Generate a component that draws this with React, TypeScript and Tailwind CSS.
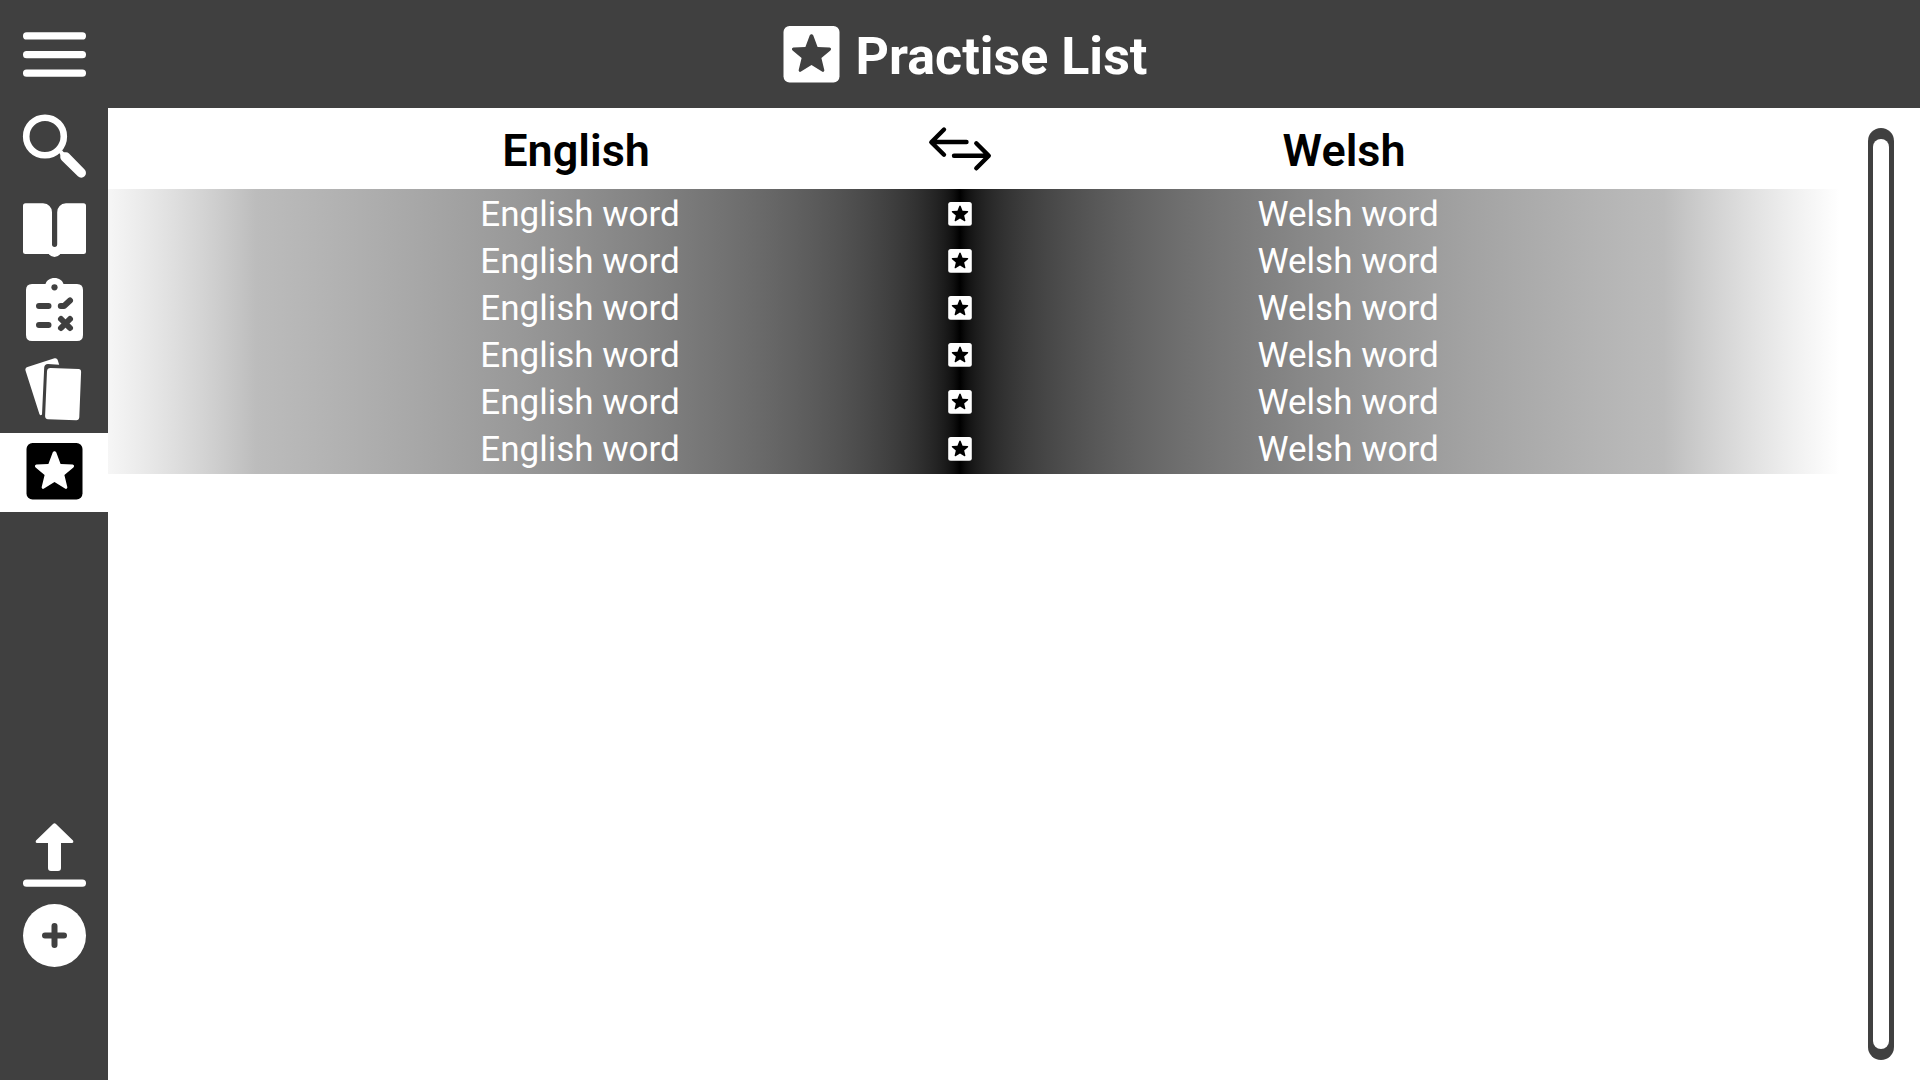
import { ReactNode } from "react";

const STAR =
  "M54.5 451.3C55.3 451.3 56 451.8 56.4 452.8L60.6 463.9L72.6 464.5C74.2 464.7 74.6 466.4 73.4 467.4L64.4 474.9L67.3 487C67.6 488.5 66.2 489.4 65 488.6L54.5 482L44 488.6C42.8 489.4 41.4 488.5 41.7 487L44.6 474.9L35.6 467.4C34.4 466.4 34.8 464.7 36.4 464.5L48.4 463.9L52.6 452.8C53 451.8 53.7 451.3 54.5 451.3Z";

function StarBox({ className, box, star }: { className: string; box: string; star: string }) {
  return (
    <svg viewBox="26 443 57 57" className={className} aria-hidden="true">
      <rect x="26.5" y="443" width="56" height="56.5" rx="6" className={box} />
      <path d={STAR} className={star} />
    </svg>
  );
}

function NavButton({ label, viewBox, children }: { label: string; viewBox: string; children: ReactNode }) {
  return (
    <button type="button" aria-label={label} className="block h-[81px] w-full shrink-0">
      <svg viewBox={viewBox} className="h-full w-full fill-white" aria-hidden="true">
        {children}
      </svg>
    </button>
  );
}

const WORDS = Array.from({ length: 6 }, (_, id) => ({ id, english: "English word", welsh: "Welsh word" }));

function Sidebar() {
  return (
    <nav aria-label="Main" className="flex w-[108px] shrink-0 flex-col bg-[#404040] pb-[104px]">
      <NavButton label="Search" viewBox="0 108 108 81">
        <circle cx="45" cy="136.5" r="18.8" fill="none" stroke="#fff" strokeWidth="6.6" />
        <path d="M60.5 151.5L63 154.5" stroke="#fff" strokeWidth="4" />
        <path d="M60.3 153.8Q60.3 152.2 62 152.2L66 152.2Q67.8 152.3 69 153.5L84.6 169.6A4.7 4.7 0 0 1 77.9 176.3L61.8 160.6Q60.4 159.2 60.3 157.5Z" />
      </NavButton>
      <NavButton label="Dictionary" viewBox="0 189 108 81">
        <path d="M25.500 203.300H43Q51.500 204.100 52 212.300V244.300A2.600 2.600 0 0 0 57.200 244.300V212.300Q57.700 204.100 66 203.300H83.500Q86 203.300 86 205.800V251.500Q86 254 83.500 254H60.200Q58 257 54.500 257Q51 257 48.800 254H25.500Q23 254 23 251.500V205.800Q23 203.300 25.500 203.300Z" />
      </NavButton>
      <NavButton label="Tests" viewBox="0 270 108 81">
        <path d="M32 284H45.500C46.500 280.500 50 278 54.500 278C59 278 62.500 280.500 63.500 284H77Q83 284 83 290V335Q83 341 77 341H32Q26 341 26 335V290Q26 284 32 284Z" />
        <circle cx="54.500" cy="287.300" r="3.100" fill="#404040" />
        <g fill="none" stroke="#404040" strokeWidth="6" strokeLinecap="round" strokeLinejoin="round">
          <path d="M39 306H48.500M39 325H48.500M60.800 306H64L70 300.500M61 319L70 328M70 319L61 328" />
        </g>
      </NavButton>
      <NavButton label="Flash cards" viewBox="0 351 108 81">
        <path d="M27.500 367L54.500 358.300Q56.800 357.700 57.600 359.700L59.200 364.800L48 364.100Q44.500 364.200 44.200 367.500L42 414.500Q40.500 416.300 39.400 414L25.500 370.500Q24.800 368 27.500 367Z" />
        <path d="M50.500 368L78.500 369Q81.200 369.200 81.100 372L79.300 417.300Q79 420.300 76.200 420.200L48 419.200Q45 418.900 45.100 416L47 371.200Q47.300 368 50.500 368Z" />
      </NavButton>
      <button type="button" aria-label="Practise list" aria-current="page" className="mt-px flex h-[79px] w-full shrink-0 justify-center bg-white pt-[10px]">
        <StarBox className="h-[57px] w-[57px]" box="fill-black" star="fill-white" />
      </button>
      <div className="mt-auto">
        <NavButton label="Upload" viewBox="0 814 108 81">
          <path d="M53 824Q54.500 822.500 56 824L73 840.500Q74 842.500 72 843H61V868Q61 871 58 871H51Q48 871 48 868V843H37Q35 842.500 36 840.500Z" />
          <rect x="23" y="879.500" width="63" height="7.300" rx="3.600" />
        </NavButton>
        <NavButton label="Add word" viewBox="0 895 108 81">
          <circle cx="54.500" cy="935.500" r="31.500" />
          <path d="M45 935.500H64M54.500 926V945" stroke="#404040" strokeWidth="6" strokeLinecap="round" />
        </NavButton>
      </div>
    </nav>
  );
}

function WordTable() {
  return (
    <div className="min-w-0 flex-1">
      <div className="bg-[linear-gradient(in_srgb-linear_to_right,#f6f6f6_0%,#bcbcbc_8.55%,#000_49.19%,#bcbcbc_89.84%,#fff_100%)] pb-[3px]">
        <table id="words" className="w-full table-fixed border-collapse text-center">
          <colgroup>
            <col />
            <col className="w-16" />
            <col className="w-[48.95%]" />
          </colgroup>
          <thead className="bg-white text-[45px] leading-[54px] text-black">
            <tr className="h-[81px]">
              <th scope="col" className="pt-1 pl-[116px] font-semibold">English</th>
              <th scope="col" className="p-0">
                <button type="button" aria-label="Swap languages" className="block h-[81px] w-16">
                  <svg viewBox="928 108 64 81" className="h-full w-full" fill="none" stroke="#000" strokeWidth="4.400" strokeLinecap="round" strokeLinejoin="round" aria-hidden="true">
                    <path d="M966.500 142H932M944 129.500L931.300 142.200L944 154.700M954 155.700H988M976.300 143.300L988.800 155.700L976.300 168.300" />
                  </svg>
                </button>
              </th>
              <th scope="col" className="pt-1 pr-[144px] font-semibold">Welsh</th>
            </tr>
          </thead>
          <tbody className="text-[35px] leading-[40px] text-white">
            {WORDS.map((word) => (
              <tr key={word.id} className="h-[47px]">
                <td className="pt-1 pl-[124px]">{word.english}</td>
                <td className="pt-[2px]">
                  <button type="button" aria-label="Remove from practise list" className="mx-auto block">
                    <StarBox className="h-6 w-6" box="fill-white" star="fill-black" />
                  </button>
                </td>
                <td className="pt-1 pr-[136px]">{word.welsh}</td>
              </tr>
            ))}
          </tbody>
        </table>
      </div>
    </div>
  );
}

export default function App() {
  return (
    <div className="flex min-h-screen flex-col bg-white font-['Roboto',sans-serif]">
      <header className="flex h-[108px] shrink-0 items-center bg-[#404040] pr-[98px]">
        <button type="button" aria-label="Menu" className="h-[108px] w-[108px] shrink-0">
          <svg viewBox="0 0 108 108" className="h-full w-full fill-white" aria-hidden="true">
            <rect x="23" y="32.200" width="63" height="7.300" rx="3.600" />
            <rect x="23" y="51" width="63" height="7.300" rx="3.600" />
            <rect x="23" y="69.500" width="63" height="7.300" rx="3.600" />
          </svg>
        </button>
        <div className="flex flex-1 items-center justify-center gap-4">
          <StarBox className="h-[57px] w-[57px]" box="fill-white" star="fill-[#404040]" />
          <h1 className="pt-[6px] text-[52px] leading-[60px] font-bold text-white">Practise List</h1>
        </div>
      </header>
      <div className="flex flex-1">
        <Sidebar />
        <main className="flex flex-1">
          <WordTable />
          <div className="flex w-20 shrink-0 py-5 pl-7">
            <div role="scrollbar" aria-label="Word list" aria-controls="words" aria-valuenow={0} className="flex w-[26px] rounded-full bg-[#404040] px-[5px] py-[11px]">
              <div className="flex-1 rounded-full bg-white" />
            </div>
          </div>
        </main>
      </div>
    </div>
  );
}
